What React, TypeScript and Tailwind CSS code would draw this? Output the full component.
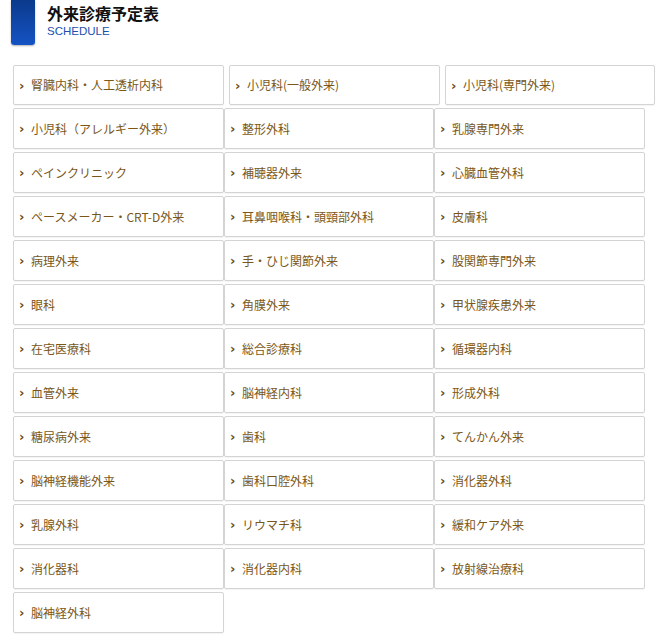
const firstRow = ['腎臓内科・人工透析内科', '小児科(一般外来)', '小児科(専門外来)'];

const departments = [
  '小児科（アレルギー外来）', '整形外科', '乳腺専門外来',
  'ペインクリニック', '補聴器外来', '心臓血管外科',
  'ペースメーカー・CRT-D外来', '耳鼻咽喉科・頭頸部外科', '皮膚科',
  '病理外来', '手・ひじ関節外来', '股関節専門外来',
  '眼科', '角膜外来', '甲状腺疾患外来',
  '在宅医療科', '総合診療科', '循環器内科',
  '血管外来', '脳神経内科', '形成外科',
  '糖尿病外来', '歯科', 'てんかん外来',
  '脳神経機能外来', '歯科口腔外科', '消化器外科',
  '乳腺外科', 'リウマチ科', '緩和ケア外来',
  '消化器科', '消化器内科', '放射線治療科',
  '脳神経外科',
];

const Item = ({ label, short }: { label: string; short?: boolean }) => (
  <a
    href="#"
    className={`flex items-center ${short ? 'h-[40px]' : 'h-[41px]'} pl-[5px] border border-[#d4d4d4] rounded-[2px] bg-white text-[12px] text-[#7a5718] shadow-[0_1px_1px_rgba(0,0,0,0.05)]`}
  >
    <span className="w-[12px] shrink-0 text-[13px] leading-none font-bold text-[#6b4c12] font-['DejaVu_Sans',sans-serif]">›</span>
    <span>{label}</span>
  </a>
);

export default function App() {
  return (
    <div className="w-[666px] h-[643px] bg-white font-['Noto_Sans_CJK_JP','Noto_Sans',sans-serif]">
      <div className="flex items-start pl-[11px]">
        <div className="w-[24px] h-[45px] rounded-b-[3px] bg-gradient-to-b from-[#0b3a8c] to-[#1553c4] shadow-[0_1px_2px_rgba(0,0,0,0.3)]" />
        <div className="pl-[12px] pt-[2px]">
          <h1 className="text-[16px] leading-[22px] font-semibold text-[#111]">外来診療予定表</h1>
          <p className="text-[11.5px] leading-[14px] text-[#1b4fae] font-['Liberation_Sans',sans-serif]">SCHEDULE</p>
        </div>
      </div>

      <div className="pl-[13px] pt-[20px]">
        <div className="flex gap-[5px] mb-[3px]">
          {firstRow.map((d, i) => (
            <div key={d} className={i === 2 ? 'w-[210px]' : 'w-[211px]'}>
              <Item label={d} short />
            </div>
          ))}
        </div>
        <div className="grid grid-cols-[211px_210px_211px] gap-y-[3px]">
          {departments.map((d) => (
            <Item key={d} label={d} />
          ))}
        </div>
      </div>
    </div>
  );
}
